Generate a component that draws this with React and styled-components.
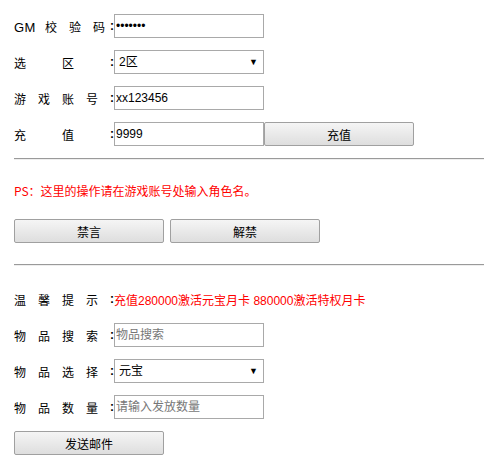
import React from 'react';
import styled, { createGlobalStyle } from 'styled-components';

const GlobalStyle = createGlobalStyle`
  html, body {
    margin: 0;
    padding: 0;
    background: #fff;
    overflow: hidden;
  }
  body {
    font-family: "Liberation Sans", "Noto Sans CJK SC", sans-serif;
    font-size: 12px;
    color: #000;
  }
`;

function App() {
  return <Page>
    <GlobalStyle />
    <Row>
      <Label><Latin>GM</Latin>校　验　码</Label>
      <Colon>:</Colon>
      <Input type="password" defaultValue="1234567" />
    </Row>
    <Row>
      <Label>选　　　区</Label>
      <Colon>:</Colon>
      <SelectBox>
        <Select defaultValue="2">
          <option value="1">1区</option>
          <option value="2">2区</option>
        </Select>
        <Arrow>▼</Arrow>
      </SelectBox>
    </Row>
    <Row>
      <Label>游　戏　账　号</Label>
      <Colon>:</Colon>
      <Input defaultValue="xx123456" />
    </Row>
    <Row>
      <Label>充　　　值</Label>
      <Colon>:</Colon>
      <Input defaultValue="9999" />
      <Button>充值</Button>
    </Row>

    <Rule $top={12} $bottom={25} />

    <Notice>PS：这里的操作请在游戏账号处输入角色名。</Notice>
    <ButtonRow>
      <Button>禁言</Button>
      <Button>解禁</Button>
    </ButtonRow>

    <Rule $top={21} $bottom={21} />

    <Row>
      <Label>温　馨　提　示</Label>
      <Colon>:</Colon>
      <Hint>充值280000激活元宝月卡 880000激活特权月卡</Hint>
    </Row>
    <Row>
      <Label>物　品　搜　索</Label>
      <Colon>:</Colon>
      <Input placeholder="物品搜索" />
    </Row>
    <Row>
      <Label>物　品　选　择</Label>
      <Colon>:</Colon>
      <SelectBox>
        <Select defaultValue="yb">
          <option value="yb">元宝</option>
        </Select>
        <Arrow>▼</Arrow>
      </SelectBox>
    </Row>
    <Row>
      <Label>物　品　数　量</Label>
      <Colon>:</Colon>
      <Input placeholder="请输入发放数量" />
    </Row>
    <Button>发送邮件</Button>
  </Page>;
}

export default App;

const Page = styled.div`
  padding: 14px 0 0 14px;
  width: 470px;
`

const Row = styled.div`
  display: flex;
  align-items: center;
  height: 24px;
  margin-bottom: 12px;
`

const Label = styled.span`
  flex: 0 0 96px;
  white-space: nowrap;
  font-family: "Noto Sans CJK SC", sans-serif;
  font-size: 12px;
`

const Latin = styled.span`
  font-family: "Liberation Sans", sans-serif;
  font-size: 13px;
  letter-spacing: 0.5px;
  margin-right: 9px;
`

const Colon = styled.span`
  flex: 0 0 4px;
  font-weight: bold;
  font-size: 12px;
`

const Input = styled.input`
  box-sizing: border-box;
  width: 150px;
  height: 24px;
  margin: 0;
  padding: 0 1px;
  border: 1px solid #a9a9a9;
  font-family: "Liberation Sans", "Noto Sans CJK SC", sans-serif;
  font-size: 12px;
  color: #000;
  outline: none;

  &::placeholder {
    color: #777;
  }
`

const SelectBox = styled.div`
  position: relative;
  width: 150px;
  height: 24px;
`

const Select = styled.select`
  box-sizing: border-box;
  width: 150px;
  height: 24px;
  margin: 0;
  padding: 0 0 0 4px;
  border: 1px solid #a9a9a9;
  border-radius: 0;
  background: #fff;
  appearance: none;
  font-family: "Liberation Sans", "Noto Sans CJK SC", sans-serif;
  font-size: 12px;
  color: #000;
  outline: none;
`

const Arrow = styled.span`
  position: absolute;
  right: 6px;
  top: 6px;
  font-size: 9px;
  line-height: 12px;
  pointer-events: none;
`

const Button = styled.button`
  box-sizing: border-box;
  width: 150px;
  height: 24px;
  margin: 0;
  padding: 0;
  border: 1px solid #a0a0a0;
  border-radius: 2px;
  background: linear-gradient(#f5f5f5, #dedede);
  font-family: "Noto Sans CJK SC", sans-serif;
  font-size: 12px;
  color: #000;
  cursor: pointer;
`

const Rule = styled.hr`
  margin: ${p => p.$top}px 0 ${p => p.$bottom}px;
  border: 0;
  border-top: 1px solid #9a9a9a;
  border-bottom: 1px solid #eee;
  height: 0;
`

const Notice = styled.div`
  color: #f00;
  font-family: "Noto Sans CJK SC", sans-serif;
  font-size: 12px;
  line-height: 12px;
  margin-bottom: 22px;
`

const ButtonRow = styled.div`
  display: flex;
  gap: 6px;
`

const Hint = styled.span`
  color: #f00;
  font-family: "Liberation Sans", "Noto Sans CJK SC", sans-serif;
  font-size: 12px;
`
